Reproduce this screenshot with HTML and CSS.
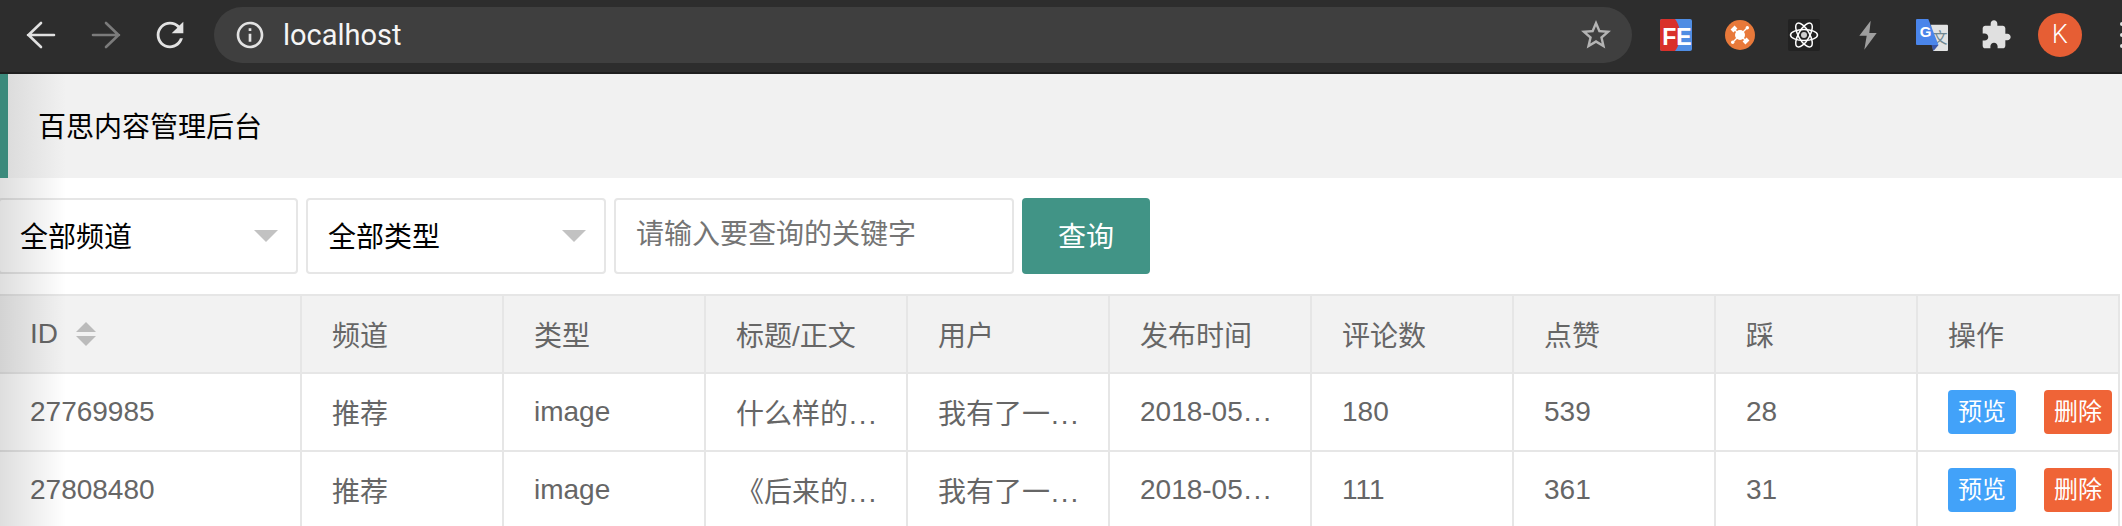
FILE: index.html
```html
<!DOCTYPE html>
<html lang="zh-CN">
<head>
<meta charset="utf-8">
<title>百思内容管理后台</title>
<link rel="stylesheet" href="styles.css">
</head>
<body>
<div class="browser-bar">
  <div class="nav-btn"><svg class="nav-svg" viewBox="0 0 40 40"><path class="stroke-light" d="M32 20H6M19 8 6.500 20 19 32"/></svg></div>
  <div class="nav-btn"><svg class="nav-svg" viewBox="0 0 40 40"><path class="stroke-dim" d="M7 20h26M20 8l12.500 12L20 32"/></svg></div>
  <div class="nav-btn"><svg class="nav-svg" viewBox="0 0 24 24"><path class="fill-light" d="M17.650 6.350C16.200 4.900 14.210 4 12 4c-4.420 0-7.990 3.580-7.990 8s3.570 8 7.990 8c3.730 0 6.840-2.550 7.730-6h-1.800c-.82 2.330-3.320 4.300-5.930 4.300-3.480 0-6.300-2.820-6.300-6.300s2.820-6.300 6.300-6.300c1.740 0 3.300.72 4.420 1.880L13 11h7V4l-2.350 2.350z"/></svg></div>
  <div class="omnibox">
    <svg class="info-icon" viewBox="0 0 24 24"><path class="fill-light" d="M11 7h2v2h-2zm0 4h2v6h-2zm1-9C6.480 2 2 6.480 2 12s4.480 10 10 10 10-4.480 10-10S17.520 2 12 2zm0 18c-4.410 0-8-3.590-8-8s3.590-8 8-8 8 3.590 8 8-3.590 8-8 8z"/></svg>
    <span class="url">localhost</span>
    <svg class="star-icon" viewBox="0 0 24 24"><path class="fill-star" d="M22 9.240l-7.190-.62L12 2 9.190 8.630 2 9.240l5.460 4.730L5.820 21 12 17.270 18.180 21l-1.630-7.030L22 9.240zM12 15.400l-3.760 2.270 1-4.280-3.320-2.880 4.380-.38L12 6.100l1.710 4.040 4.380.38-3.320 2.880 1 4.280L12 15.400z"/></svg>
  </div>
  <div class="extensions">
    <div class="ext-btn">
      <svg class="ext-svg" viewBox="0 0 32 32">
        <rect class="fe-blue" width="32" height="32" rx="2"/>
        <path class="fe-red" d="M2 0h13c3 4 5 9 5 16s-2 12-5 16H2a2 2 0 0 1-2-2V2a2 2 0 0 1 2-2z"/>
        <text class="fe-text" x="17" y="26" text-anchor="middle">FE</text>
      </svg>
    </div>
    <div class="ext-btn">
      <svg class="ext-svg" viewBox="0 0 32 32">
        <circle class="or-bg" cx="16" cy="16" r="15"/>
        <path class="or-arm" d="M10 10l12 12M22.500 9.500l-13 13"/>
        <path class="or-bar" d="M8 12l4-4M20 24l4-4"/>
        <circle class="or-dot" cx="16" cy="16" r="5"/>
        <circle class="or-dot" cx="23.300" cy="8.700" r="1.700"/>
        <circle class="or-dot" cx="8.700" cy="23.300" r="1.700"/>
      </svg>
    </div>
    <div class="ext-btn">
      <svg class="ext-svg" viewBox="0 0 32 32">
        <rect class="re-bg" width="32" height="32" rx="2"/>
        <g class="re-orbits">
          <ellipse cx="16" cy="16" rx="13.500" ry="5.500"/>
          <ellipse cx="16" cy="16" rx="13.500" ry="5.500" transform="rotate(60 16 16)"/>
          <ellipse cx="16" cy="16" rx="13.500" ry="5.500" transform="rotate(120 16 16)"/>
        </g>
        <circle class="re-core" cx="16" cy="16" r="3"/>
      </svg>
    </div>
    <div class="ext-btn">
      <svg class="ext-svg" viewBox="0 0 32 32"><polygon class="bolt" points="18.700,1.700 7.300,16.700 14.700,16.700 12.300,30.700 24.700,14 17.300,14"/></svg>
    </div>
    <div class="ext-btn">
      <svg class="ext-svg" viewBox="0 0 32 32">
        <path class="gt-page" d="M15 5.700h16a1 1 0 0 1 1 1V31a1 1 0 0 1-1 1H17z"/>
        <text class="gt-wen" x="24" y="24" text-anchor="middle">文</text>
        <path class="gt-fold" d="M15.500 26h7l-5 6z"/>
        <path class="gt-blue" d="M1 0h11.300l10.200 26H1a1 1 0 0 1-1-1V1a1 1 0 0 1 1-1z"/>
        <text class="gt-g" x="9.500" y="18" text-anchor="middle">G</text>
      </svg>
    </div>
    <div class="ext-btn">
      <svg class="ext-svg" viewBox="0 0 24 24"><path class="fill-puzzle" d="M20.500 11H19V7c0-1.100-.9-2-2-2h-4V3.500C13 2.120 11.880 1 10.500 1S8 2.120 8 3.500V5H4c-1.100 0-1.990.9-1.990 2v3.800H3.500c1.490 0 2.700 1.210 2.700 2.700s-1.210 2.700-2.700 2.700H2V20c0 1.100.9 2 2 2h3.800v-1.500c0-1.490 1.210-2.700 2.700-2.700 1.490 0 2.700 1.210 2.700 2.700V22H17c1.100 0 2-.9 2-2v-4h1.500c1.380 0 2.500-1.120 2.500-2.500S21.880 11 20.500 11z"/></svg>
    </div>
    <div class="ext-btn"><div class="avatar">K</div></div>
    <div class="kebab"><span class="dot"></span><span class="dot"></span><span class="dot"></span></div>
  </div>
</div>

<div class="page">
  <div class="left-shade"></div>
  <header class="page-header">百思内容管理后台</header>

  <form class="filters">
    <div class="select"><span class="select-label">全部频道</span><i class="caret"></i></div>
    <div class="select"><span class="select-label">全部类型</span><i class="caret"></i></div>
    <input class="keyword" type="text" placeholder="请输入要查询的关键字">
    <button class="search-btn" type="button">查询</button>
  </form>

  <table class="data-table">
    <colgroup>
      <col class="col-id"><col class="col"><col class="col"><col class="col"><col class="col"><col class="col"><col class="col"><col class="col"><col class="col"><col class="col">
    </colgroup>
    <thead>
      <tr>
        <th><span class="th-id">ID<span class="sort"><i class="sort-up"></i><i class="sort-down"></i></span></span></th>
        <th>频道</th><th>类型</th><th>标题/正文</th><th>用户</th><th>发布时间</th><th>评论数</th><th>点赞</th><th>踩</th><th>操作</th>
      </tr>
    </thead>
    <tbody>
      <tr>
        <td><div class="cell">27769985</div></td>
        <td><div class="cell">推荐</div></td>
        <td><div class="cell">image</div></td>
        <td><div class="cell">什么样的<span class="dots">...</span></div></td>
        <td><div class="cell">我有了一<span class="dots">...</span></div></td>
        <td><div class="cell">2018-05<span class="dots">...</span></div></td>
        <td><div class="cell">180</div></td>
        <td><div class="cell">539</div></td>
        <td><div class="cell">28</div></td>
        <td><div class="actions"><button class="btn btn-blue" type="button">预览</button><button class="btn btn-red" type="button">删除</button></div></td>
      </tr>
      <tr>
        <td><div class="cell">27808480</div></td>
        <td><div class="cell">推荐</div></td>
        <td><div class="cell">image</div></td>
        <td><div class="cell">《后来的<span class="dots">...</span></div></td>
        <td><div class="cell">我有了一<span class="dots">...</span></div></td>
        <td><div class="cell">2018-05<span class="dots">...</span></div></td>
        <td><div class="cell">111</div></td>
        <td><div class="cell">361</div></td>
        <td><div class="cell">31</div></td>
        <td><div class="actions"><button class="btn btn-blue" type="button">预览</button><button class="btn btn-red" type="button">删除</button></div></td>
      </tr>
    </tbody>
  </table>
</div>
</body>
</html>
```
FILE: styles.css
```css
* { box-sizing: border-box; }
html, body { margin: 0; height: 100%; overflow: hidden; background: #fff; }
body { font-family: "Liberation Sans", "Noto Sans CJK SC", sans-serif; font-size: 28px; color: #666; }

/* browser chrome */
.browser-bar {
  display: flex; align-items: center; height: 74px; padding: 0 0 2px 10px;
  background: #2d2d2d; border-bottom: 2px solid #1f1f1f; overflow: hidden;
}
.nav-btn { flex: none; width: 64px; height: 72px; display: flex; align-items: center; justify-content: center; }
.nav-svg { width: 40px; height: 40px; display: block; }
.stroke-light, .stroke-dim { fill: none; stroke-width: 2.600; stroke-linecap: round; stroke-linejoin: round; }
.stroke-light { stroke: #e0e0e0; }
.stroke-dim { stroke: #7b7b7b; }
.fill-light { fill: #e2e2e2; }
.fill-star { fill: #b4b4b4; }
.fill-puzzle { fill: #e0e0e0; }
.omnibox {
  flex: none; width: 1418px; height: 56px; margin-left: 12px; padding: 0 18px 0 20px;
  display: flex; align-items: center; background: #3f3f3f; border-radius: 28px;
}
.info-icon { flex: none; width: 32px; height: 32px; }
.url { margin-left: 17px; font-family: Roboto, sans-serif; font-size: 29px; color: #f5f5f5; }
.star-icon { flex: none; width: 36px; height: 36px; margin-left: auto; }
.extensions { flex: none; display: flex; align-items: center; margin-left: 12px; }
.ext-btn { flex: none; width: 64px; height: 72px; display: flex; align-items: center; justify-content: center; }
.ext-svg { width: 32px; height: 32px; display: block; }
.fe-blue { fill: #4f8de3; }
.fe-red { fill: #d9302a; }
.fe-text { font-family: "Liberation Sans", sans-serif; font-size: 23px; font-weight: 700; fill: #fff; }
.or-bg { fill: #e8793a; }
.or-arm { stroke: #fff; stroke-width: 1.400; fill: none; }
.or-bar { stroke: #fff; stroke-width: 4; fill: none; }
.or-dot { fill: #fff; }
.re-bg { fill: #222; }
.re-orbits { fill: none; stroke: #fff; stroke-width: 1.500; }
.re-core { fill: #cfcfcf; }
.bolt { fill: #9e9e9e; }
.gt-page { fill: #e2e3e3; }
.gt-wen { font-family: "Noto Sans CJK SC", sans-serif; font-size: 15px; fill: #6f8791; }
.gt-fold { fill: #3a56a8; }
.gt-blue { fill: #4a85ea; }
.gt-g { font-family: "Liberation Sans", sans-serif; font-size: 15px; font-weight: 700; fill: #fff; }
.avatar {
  width: 44px; height: 44px; border-radius: 50%; background: #e65e34; color: #fff;
  font-family: Roboto, sans-serif; font-weight: 300; font-size: 25px; line-height: 44px; text-align: center;
}
.kebab { flex: none; width: 60px; display: flex; flex-direction: column; align-items: center; gap: 7px; }
.dot { width: 4px; height: 4px; border-radius: 50%; background: #e0e0e0; }

/* page */
.page { position: relative; }
.left-shade {
  position: absolute; left: 0; top: 0; bottom: 0; width: 66px; z-index: 2; pointer-events: none;
  background: linear-gradient(to right, rgba(0,0,0,.13), rgba(0,0,0,0));
}
.page-header {
  position: relative; z-index: 3; height: 104px; padding: 0 0 2px 30px; display: flex; align-items: center;
  background: linear-gradient(to right, #dcdcdc 0, #f1f1f1 58px); border-left: 8px solid #3b8a7c;
  color: #000;
}
.filters { display: flex; gap: 8px; margin: 20px 0 20px -2px; }
.select {
  width: 300px; height: 76px; padding: 0 18px 0 20px; display: flex; align-items: center; justify-content: space-between;
  border: 2px solid #e6e6e6; border-radius: 4px; color: #000; background: #fff;
}
.select-label { margin-bottom: 2px; }
.caret { width: 0; height: 0; border-style: solid; border-width: 12px 12px 0; border-color: #c2c2c2 transparent transparent; }
.keyword {
  width: 400px; height: 76px; padding: 0 20px 2px; border: 2px solid #e6e6e6; border-radius: 4px;
  font: inherit; color: #000; outline: none; background: #fff;
}
.keyword::placeholder { color: #757575; opacity: 1; }
.search-btn {
  width: 128px; height: 76px; border: 0; border-radius: 4px; background: #419486; color: #fff; font: inherit; padding: 0 0 3px;
}

/* table */
.data-table { width: 2120px; table-layout: fixed; border-collapse: separate; border-spacing: 0; border-top: 2px solid #e6e6e6; }
.col-id { width: 302px; }
.col { width: 202px; }
.data-table th, .data-table td {
  height: 78px; padding: 0; border-right: 2px solid #e6e6e6; border-bottom: 2px solid #e6e6e6;
  font-weight: 400; text-align: left; color: #666; vertical-align: middle;
}
.data-table th { height: 78px; padding: 0 30px; background: #f2f2f2; }
.th-id { display: flex; align-items: center; gap: 18px; }
.sort { display: flex; flex-direction: column; gap: 4px; }
.sort-up, .sort-down { width: 0; height: 0; border-style: solid; border-color: transparent; }
.sort-up { border-width: 0 10px 10px; border-bottom-color: #bbb; }
.sort-down { border-width: 10px 10px 0; border-top-color: #bbb; }
.cell { padding: 0 30px; white-space: nowrap; overflow: hidden; }
.dots { letter-spacing: 2px; margin-left: 1px; }
.actions { display: flex; gap: 28px; padding-left: 30px; white-space: nowrap; }
.btn {
  flex: none; width: 68px; height: 44px; padding: 0; border: 0; border-radius: 4px; color: #fff;
  font: inherit; font-size: 24px; line-height: 44px;
}
.btn-blue { background: #42a2f9; }
.btn-red { background: #ef6437; }
```
